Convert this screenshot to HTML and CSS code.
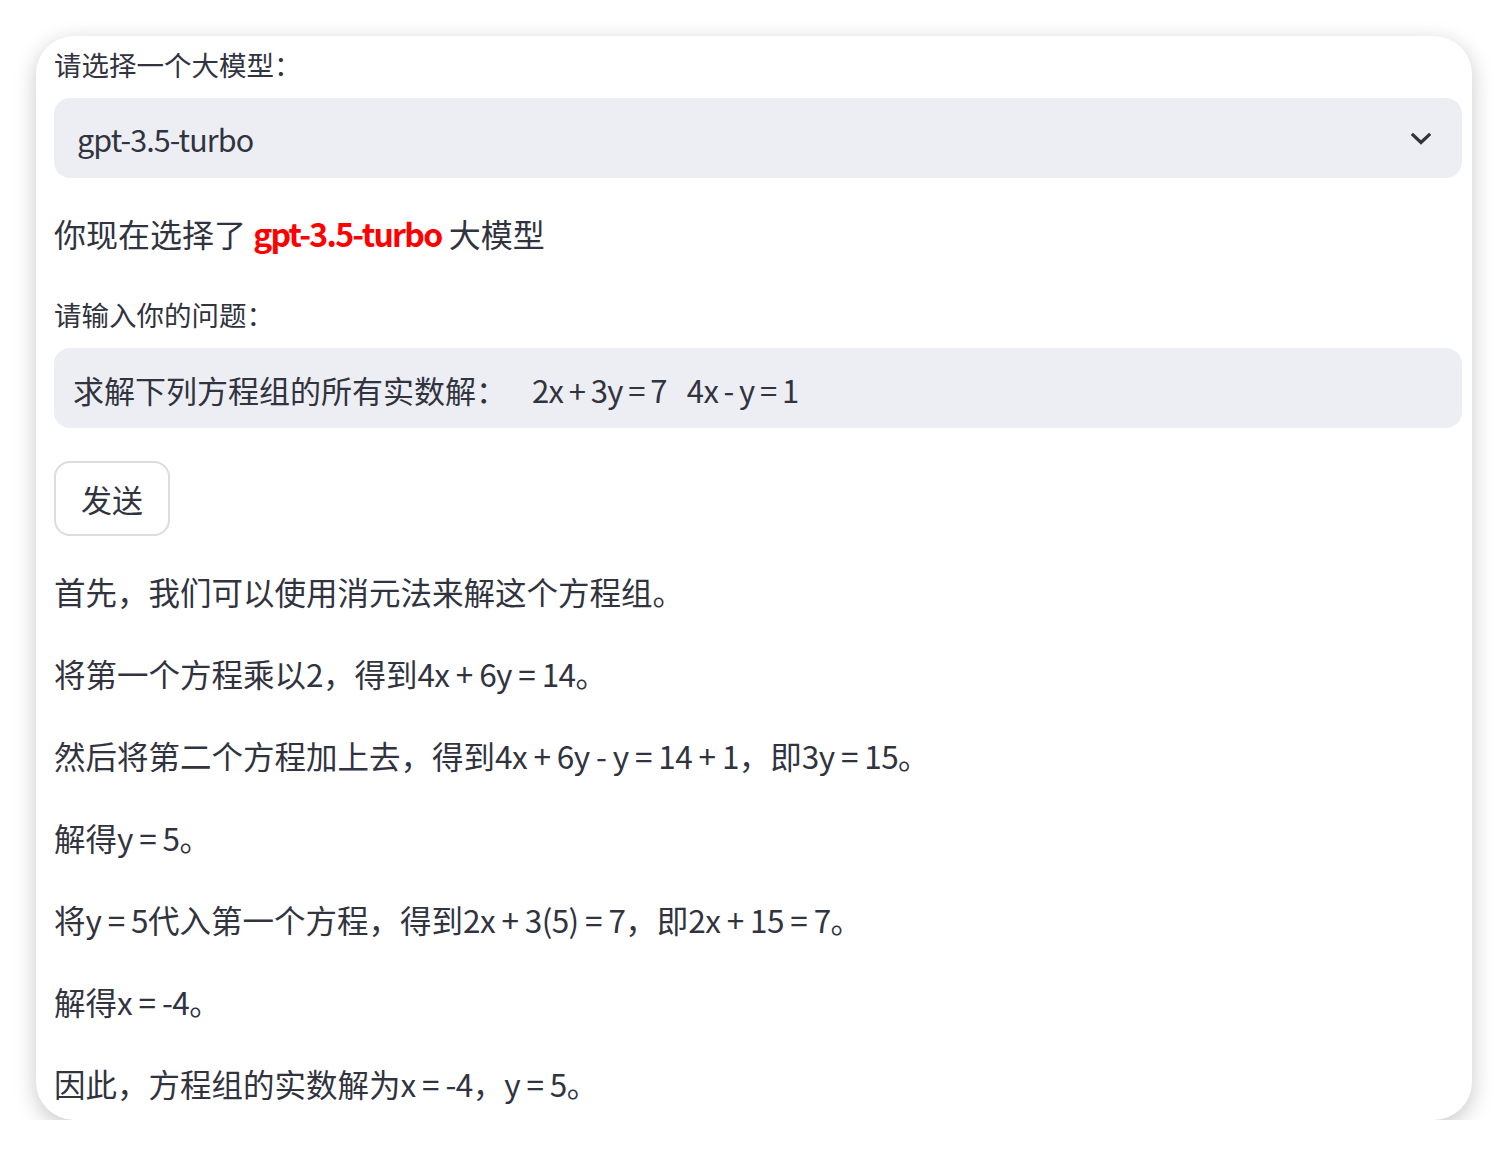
FILE: index.html
```html
<!DOCTYPE html>
<html lang="zh-CN">
<head>
    <meta charset="UTF-8">
    <meta name="viewport" content="width=device-width, initial-scale=1.0">
    <title>大模型问答</title>
    <link rel="stylesheet" href="styles.css">
</head>
<body>
    <div class="card">
        <label class="field-label" for="model-select">请选择一个大模型：</label>
        <div class="select-box" id="model-select">
            <span class="en">gpt-3.5-turbo</span>
            <svg class="chevron" width="22" height="14" viewBox="0 0 22 14">
                <path d="M3 3 L11 10.5 L19 3" fill="none" stroke="#31333f" stroke-width="3.2" stroke-linecap="square"/>
            </svg>
        </div>

        <p class="chosen">你现在选择了 <b class="model-name">gpt-3.5-turbo</b> 大模型</p>

        <label class="field-label question-label" for="question">请输入你的问题：</label>
        <div class="text-input" id="question">求解下列方程组的所有实数解：<span class="en first-eq">2x + 3y = 7</span><span class="en second-eq">4x - y = 1</span></div>

        <button class="send-button">发送</button>

        <!-- 回答 -->
        <div class="answer">
            <p>首先，我们可以使用消元法来解这个方程组。</p>
            <p>将第一个方程乘以<span class="en">2</span>，得到<span class="en">4x + 6y = 14</span>。</p>
            <p>然后将第二个方程加上去，得到<span class="en">4x + 6y - y = 14 + 1</span>，即<span class="en">3y = 15</span>。</p>
            <p>解得<span class="en">y = 5</span>。</p>
            <p>将<span class="en">y = 5</span>代入第一个方程，得到<span class="en">2x + 3(5) = 7</span>，即<span class="en">2x + 15 = 7</span>。</p>
            <p>解得<span class="en">x = -4</span>。</p>
            <p>因此，方程组的实数解为<span class="en">x = -4</span>，<span class="en">y = 5</span>。</p>
        </div>
    </div>
</body>
</html>
```

FILE: styles.css
```css
body {
    margin: 0; padding: 36px 36px 0 36px;
    background-color: #ffffff; color: #31333f;
    font-family: "Noto Sans CJK SC", "Liberation Sans", sans-serif;
}

.card {
    width: 1436px; height: 1084px; box-sizing: border-box;
    padding: 10px 10px 0 18px;
    background-color: #ffffff; border-radius: 38px;
    box-shadow: 0 6px 22px rgba(0, 0, 0, 0.22);
    display: flex; flex-direction: column; align-items: flex-start;
    overflow: hidden;
}

.en { letter-spacing: -0.6px; }

.field-label {
    display: block; font-size: 27.5px; line-height: 36px;
    margin-bottom: 16px;
}

.select-box {
    align-self: stretch; height: 80px; flex-shrink: 0; box-sizing: border-box;
    padding: 2px 30px 0 23px; border-radius: 16px;
    background-color: #eceef3;
    display: flex; align-items: center; justify-content: space-between;
    font-size: 30.5px;
}
.select-box .en { letter-spacing: -0.9px; }
.chevron { display: block; }

.chosen {
    margin: 32px 0 0; font-size: 32px; line-height: 46px;
}
.model-name { color: #ff0000; font-weight: bold; letter-spacing: -1.7px; }

.question-label { margin-top: 40px; }

.text-input {
    align-self: stretch; height: 80px; flex-shrink: 0; box-sizing: border-box;
    padding: 2px 19px 0; border-radius: 16px;
    background-color: #eceef3;
    display: flex; align-items: center;
    font-size: 31px; white-space: pre;
}
.text-input .en { word-spacing: -1px; }
.text-input .first-eq { margin-left: 25px; }
.text-input .second-eq { margin-left: 20px; }

.send-button {
    margin-top: 33px; width: 116px; height: 75px; flex-shrink: 0;
    background-color: #ffffff; color: #31333f;
    border: 2px solid #dcdcdf; border-radius: 16px;
    font-family: inherit; font-size: 31px;
    cursor: pointer;
}

.answer { margin-top: 30px; }
.answer p {
    margin: 0 0 32px; font-size: 31.5px; line-height: 50px;
}
```
